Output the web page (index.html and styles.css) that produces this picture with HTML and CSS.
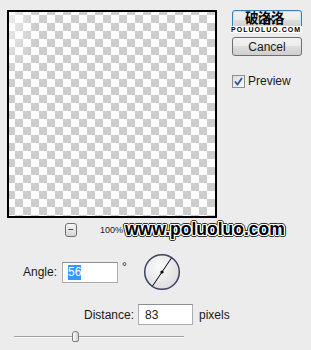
FILE: index.html
```html
<!DOCTYPE html>
<html lang="en">
<head>
  <meta charset="UTF-8" />
  <title>Motion Blur</title>
  <link rel="stylesheet" href="styles.css">
</head>
<body>
  <div class="dialog">
    <div class="top">
      <!-- preview area with zoom controls -->
      <div class="preview-col">
        <div class="preview"></div>
        <div class="zoom-bar">
          <span class="zoom-btn">&minus;</span>
          <span class="zoom-pct">100%</span>
          <span class="mark-url">www.poluoluo.com</span>
        </div>
      </div>

      <!-- OK / Cancel / Preview -->
      <div class="buttons">
        <button class="btn btn-ok">OK</button>
        <div class="mark-logo">
          <div class="mark-cn">破洛洛</div>
          <div class="mark-en">POLUOLUO.COM</div>
        </div>
        <button class="btn btn-cancel">Cancel</button>
        <label class="check">
          <span class="check-box">
            <svg width="9" height="9" viewBox="0 0 9 9"><path d="M1 4.5 L3.5 7.5 L8 1" fill="none" stroke="#2a53a8" stroke-width="1.8"/></svg>
          </span>
          Preview
        </label>
      </div>
    </div>

    <div class="angle-row">
      <span class="label">Angle:</span>
      <div class="field field-angle"><span class="sel">56</span></div>
      <span class="deg">°</span>
      <!--dial, line at 56 degrees-->
      <svg class="dial" width="38" height="38" viewBox="0 0 38 38">
        <defs>
          <radialGradient id="dialfill" cx="40%" cy="35%" r="70%">
            <stop offset="0" stop-color="#fafafa"/>
            <stop offset="1" stop-color="#dcdcdc"/>
          </radialGradient>
        </defs>
        <circle cx="19" cy="19" r="17.3" fill="url(#dialfill)" stroke="#3d4262" stroke-width="1.5"/>
        <line x1="9.5" y1="33.1" x2="28.5" y2="4.9" stroke="#000" stroke-width="1"/>
        <circle cx="19" cy="19" r="1.6" fill="#000"/>
      </svg>
    </div>

    <div class="distance-row">
      <span class="label">Distance:</span>
      <div class="field field-dist">83</div>
      <span class="unit">pixels</span>
    </div>

    <div class="slider">
      <div class="track"></div>
      <div class="thumb"></div>
    </div>
  </div>
</body>
</html>
```

FILE: styles.css
```css
body {
  margin: 0;
  background: #ececec;
  font-family: "Liberation Sans", Arial, sans-serif;
  font-size: 12px;
  color: #1a1a1a;
}

.dialog {
  padding-top: 10px;
}

.top {
  display: flex;
}

.preview-col {
  margin-left: 7px;
}

/* transparent checker + soft light in the corner */
.preview {
  width: 210px;
  height: 208px;
  box-sizing: border-box;
  border: 2px solid #000;
  background-color: #fff;
  background-image:
    radial-gradient(ellipse 28px 70px at 0 0, rgba(255, 255, 255, 0.65), rgba(255, 255, 255, 0)),
    conic-gradient(#cdcdcd 25%, #fff 0 50%, #cdcdcd 0 75%, #fff 0);
  background-size: auto, 16px 16px;
  background-position: 0 0, 14px 11px;
}

.zoom-bar {
  position: relative;
  display: flex;
  align-items: center;
  height: 14px;
  margin-top: 5px;
}

.zoom-btn {
  width: 12px;
  height: 14px;
  box-sizing: border-box;
  margin-left: 58px;
  border: 1px solid #6f6f6f;
  border-radius: 3px;
  background: linear-gradient(#f6f6f6, #d6d6d6);
  font-size: 10px;
  line-height: 11px;
  text-align: center;
}

.zoom-pct {
  margin-left: 23px;
  font-size: 9px;
}

/* site watermark on top of zoom bar */
.mark-url {
  position: absolute;
  left: 118px;
  top: -4px;
  font-size: 17.5px;
  font-weight: bold;
  line-height: 20px;
  color: #000;
  text-shadow:
    1px 0 0 #fff, -1px 0 0 #fff, 0 1px 0 #fff, 0 -1px 0 #fff,
    1px 1px 0 #fff, -1px -1px 0 #fff, 1px -1px 0 #fff, -1px 1px 0 #fff,
    2px 0 0 #333, -2px 0 0 #333, 0 2px 0 #333, 0 -2px 0 #333,
    2px 1px 0 #333, -2px -1px 0 #333, 1px 2px 0 #333, -1px -2px 0 #333,
    2px -1px 0 #333, -2px 1px 0 #333, 1px -2px 0 #333, -1px 2px 0 #333;
}

.buttons {
  position: relative;
  display: flex;
  flex-direction: column;
  align-items: flex-start;
  margin-left: 15px;
}

.btn {
  width: 70px;
  height: 19px;
  padding: 0;
  border: 1px solid #707070;
  border-radius: 3px;
  background: linear-gradient(#f2f2f2 0%, #ebebeb 50%, #dddddd 50%, #cfcfcf 100%);
  font-family: inherit;
  font-size: 12px;
  color: #1a1a1a;
}

.btn-cancel {
  margin-top: 8px;
}

.btn-ok {
  border-color: #3c7fb1;
  box-shadow: inset 0 0 0 1px #bfe6f9;
}

.mark-logo {
  position: absolute;
  left: -2px;
  top: 0;
  width: 72px;
  text-align: center;
}

.mark-cn {
  font-family: "Noto Sans CJK SC", sans-serif;
  font-size: 13.5px;
  font-weight: bold;
  line-height: 15px;
  letter-spacing: -0.5px;
  color: #000;
  padding-right: 3px;
}

.mark-en {
  margin-top: 1px;
  background: #fff;
  font-size: 7px;
  font-weight: bold;
  line-height: 7px;
  letter-spacing: 1px;
  color: #000;
}

.check {
  display: flex;
  align-items: center;
  margin-top: 18px;
}

.check-box {
  display: flex;
  align-items: center;
  justify-content: center;
  width: 13px;
  height: 13px;
  box-sizing: border-box;
  margin-right: 3px;
  border: 1px solid #8e8f8f;
  background: linear-gradient(135deg, #dcdcdc, #fbfbfb);
}

.angle-row {
  display: flex;
  align-items: center;
  height: 38px;
  margin-top: 16px;
  padding-left: 23px;
}

.field {
  width: 56px;
  height: 21px;
  box-sizing: border-box;
  padding-left: 5px;
  border: 1px solid #abadb3;
  border-top-color: #8a8d94;
  background: #fff;
  display: flex;
  align-items: center;
}

.field-angle {
  margin-left: 5px;
}

.sel {
  background: #3399ff;
  color: #fff;
  line-height: 15px;
}

.deg {
  margin-left: 4px;
  align-self: flex-start;
  margin-top: 7px;
}

.dial {
  margin-left: 16px;
}

.distance-row {
  display: flex;
  align-items: center;
  margin-top: 13px;
  padding-left: 84px;
}

.field-dist {
  width: 55px;
  margin-left: 4px;
  padding-left: 6px;
}

.unit {
  margin-left: 6px;
}

.slider {
  position: relative;
  width: 170px;
  height: 11px;
  margin: 6px 0 0 14px;
}

.track {
  position: absolute;
  left: 0;
  right: 0;
  top: 5px;
  border-top: 1px solid #a2a2a2;
  border-bottom: 1px solid #fafafa;
}

.thumb {
  position: absolute;
  left: 58px;
  top: 0;
  width: 7px;
  height: 11px;
  box-sizing: border-box;
  border: 1px solid #7d7d7d;
  border-radius: 3px 3px 2px 2px;
  background: linear-gradient(90deg, #fdfdfd, #cfcfcf);
}
```
